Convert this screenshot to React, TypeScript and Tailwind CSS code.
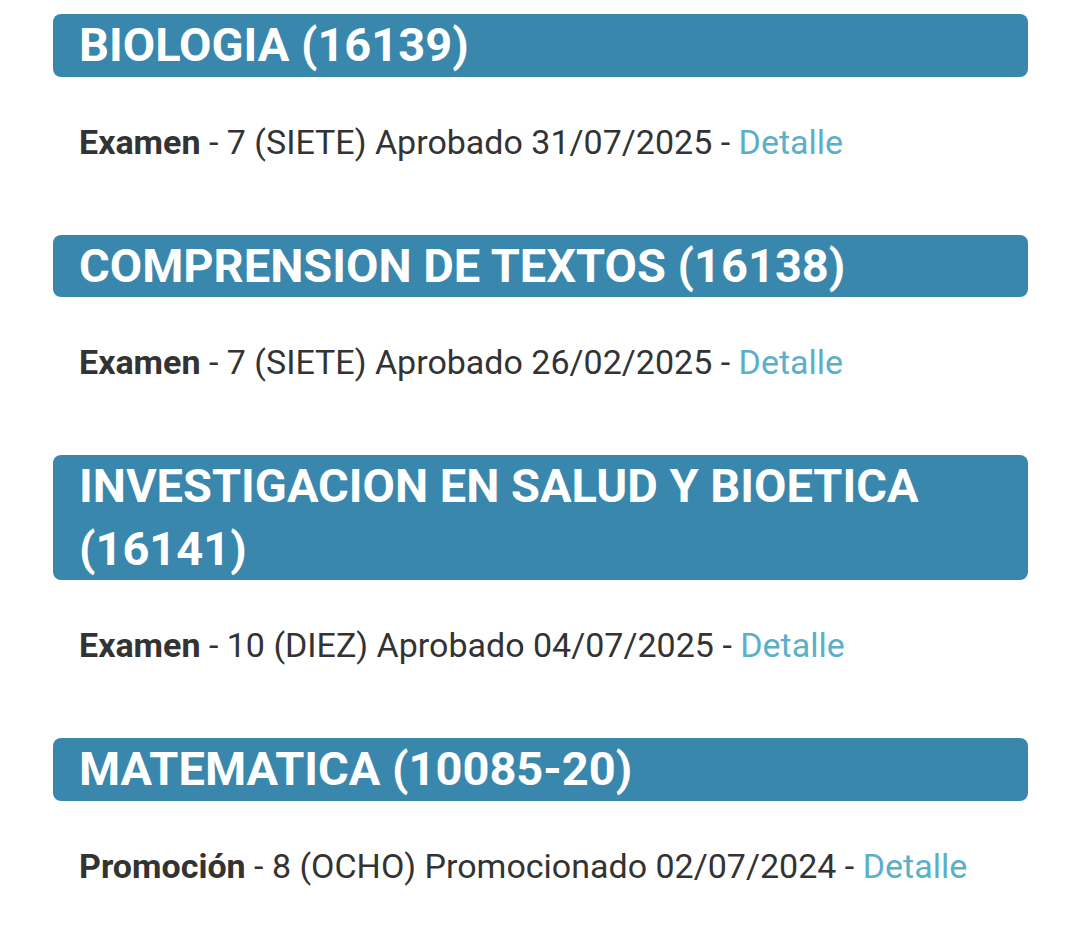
const materias = [
  {
    nombre: 'BIOLOGIA (16139)',
    tipo: 'Examen',
    detalle: '7 (SIETE) Aprobado 31/07/2025',
  },
  {
    nombre: 'COMPRENSION DE TEXTOS (16138)',
    tipo: 'Examen',
    detalle: '7 (SIETE) Aprobado 26/02/2025',
  },
  {
    nombre: 'INVESTIGACION EN SALUD Y BIOETICA (16141)',
    tipo: 'Examen',
    detalle: '10 (DIEZ) Aprobado 04/07/2025',
  },
  {
    nombre: 'MATEMATICA (10085-20)',
    tipo: 'Promoción',
    detalle: '8 (OCHO) Promocionado 02/07/2024',
  },
];

export default function App() {
  return (
    <div className="min-h-screen bg-white font-['Roboto',sans-serif] text-[#333]">
      <div className="ml-[53px] w-[975px] pt-[14px]">
        {materias.map((m, i) => (
          <section key={m.nombre} className={i > 0 ? 'mt-[69px]' : ''}>
            <h2 className="rounded-[8px] bg-[#3a87ad] pl-[26px] pr-[80px] text-[47px] font-bold leading-[62.5px] text-white">
              {m.nombre}
            </h2>
            <p className="mt-[41px] pl-[26px] text-[34px] leading-[48px]">
              <span className="font-bold">{m.tipo}</span> - {m.detalle} -{' '}
              <a href="#" className="text-[#5bafc9]">
                Detalle
              </a>
            </p>
          </section>
        ))}
      </div>
    </div>
  );
}
